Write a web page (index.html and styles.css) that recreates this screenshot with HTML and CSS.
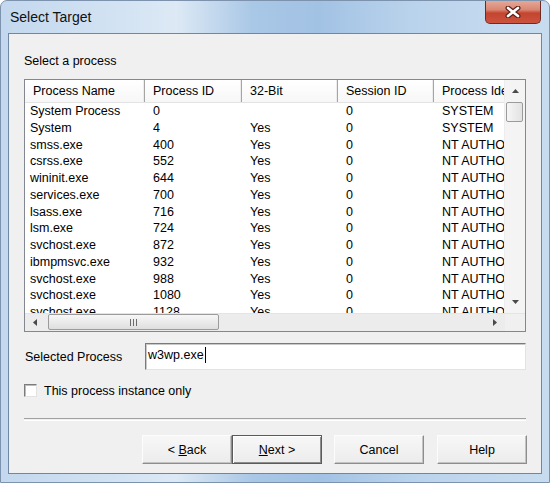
FILE: index.html
```html
<!DOCTYPE html>
<html lang="en">
<head>
    <meta charset="UTF-8">
    <meta name="viewport" content="width=device-width, initial-scale=1.0">
    <title>Select Target</title>
    <link rel="stylesheet" href="styles.css">
</head>
<body>
    <div id="dialog">
        <div class="titlebar">
            <p class="title">Select Target</p>
            <div class="close">
                <svg width="16" height="12" viewBox="0 0 16 12">
                    <path d="M3 2 L13 10 M13 2 L3 10" stroke="#5a2219" stroke-width="5" stroke-linecap="round"/>
                    <path d="M3 2 L13 10 M13 2 L3 10" stroke="#fff" stroke-width="2.6" stroke-linecap="round"/>
                </svg>
            </div>
        </div>

        <div class="client">
            <p class="caption">Select a process</p>

            <div class="list">
                <div class="list-body">
                    <div class="view">
                        <div class="row head">
                            <span>Process Name</span><span>Process ID</span><span>32-Bit</span><span>Session ID</span><span>Process Identity</span>
                        </div>
                        <div class="row"><span>System Process</span><span>0</span><span></span><span>0</span><span>SYSTEM</span></div>
                        <div class="row"><span>System</span><span>4</span><span>Yes</span><span>0</span><span>SYSTEM</span></div>
                        <div class="row"><span>smss.exe</span><span>400</span><span>Yes</span><span>0</span><span>NT AUTHORITY\SYSTEM</span></div>
                        <div class="row"><span>csrss.exe</span><span>552</span><span>Yes</span><span>0</span><span>NT AUTHORITY\SYSTEM</span></div>
                        <div class="row"><span>wininit.exe</span><span>644</span><span>Yes</span><span>0</span><span>NT AUTHORITY\SYSTEM</span></div>
                        <div class="row"><span>services.exe</span><span>700</span><span>Yes</span><span>0</span><span>NT AUTHORITY\SYSTEM</span></div>
                        <div class="row"><span>lsass.exe</span><span>716</span><span>Yes</span><span>0</span><span>NT AUTHORITY\SYSTEM</span></div>
                        <div class="row"><span>lsm.exe</span><span>724</span><span>Yes</span><span>0</span><span>NT AUTHORITY\SYSTEM</span></div>
                        <div class="row"><span>svchost.exe</span><span>872</span><span>Yes</span><span>0</span><span>NT AUTHORITY\SYSTEM</span></div>
                        <div class="row"><span>ibmpmsvc.exe</span><span>932</span><span>Yes</span><span>0</span><span>NT AUTHORITY\SYSTEM</span></div>
                        <div class="row"><span>svchost.exe</span><span>988</span><span>Yes</span><span>0</span><span>NT AUTHORITY\SYSTEM</span></div>
                        <div class="row"><span>svchost.exe</span><span>1080</span><span>Yes</span><span>0</span><span>NT AUTHORITY\SYSTEM</span></div>
                        <div class="row"><span>svchost.exe</span><span>1128</span><span>Yes</span><span>0</span><span>NT AUTHORITY\SYSTEM</span></div>
                    </div>
                    <div class="vscroll">
                        <div class="arrow-v">
                            <svg width="7" height="4" viewBox="0 0 7 4"><polygon points="0,4 3.5,0 7,4" fill="#4a4a4a"/></svg>
                        </div>
                        <div class="vthumb"></div>
                        <div class="track"></div>
                        <div class="arrow-v">
                            <svg width="7" height="4" viewBox="0 0 7 4"><polygon points="0,0 7,0 3.5,4" fill="#4a4a4a"/></svg>
                        </div>
                    </div>
                </div>
                <div class="hscroll">
                    <div class="arrow-h">
                        <svg width="4" height="7" viewBox="0 0 4 7"><polygon points="4,0 4,7 0,3.5" fill="#4a4a4a"/></svg>
                    </div>
                    <div class="hthumb">
                        <svg width="7" height="7" viewBox="0 0 7 7">
                            <path d="M0.5 0 V7 M3.5 0 V7 M6.5 0 V7" stroke="#6b6b6b" stroke-width="1"/>
                        </svg>
                    </div>
                    <div class="track"></div>
                    <div class="arrow-h">
                        <svg width="4" height="7" viewBox="0 0 4 7"><polygon points="0,0 4,3.5 0,7" fill="#4a4a4a"/></svg>
                    </div>
                    <div class="corner"></div>
                </div>
            </div>

            <div class="selected">
                <label>Selected Process</label>
                <div class="textbox">w3wp.exe<span class="caret"></span></div>
            </div>

            <div class="check">
                <span class="box"></span>
                <label>This process instance only</label>
            </div>

            <div class="separator"></div>

            <div class="buttons">
                <button>&lt; <u>B</u>ack</button>
                <button class="default"><u>N</u>ext &gt;</button>
                <button class="spaced">Cancel</button>
                <button class="spaced">Help</button>
            </div>
        </div>
    </div>
</body>
</html>
```

FILE: styles.css
```css
body
{
    margin: 0;
    font-family: "Liberation Sans", Arial, sans-serif;
    font-size: 12.5px;
    color: #000;
}
p
{
    margin: 0;
}

#dialog
{
    width: 550px;
    height: 483px;
    display: flex;
    flex-direction: column;
    box-sizing: border-box;
    border-radius: 7px 7px 0 0;
    border: 1px solid #7d93ad;
    background: linear-gradient(90deg, #c3d8ee 0%, #d3e3f3 22%, #dde9f5 32%, #a9c7e6 46%, #a2c2e4 58%, #bad3ec 75%, #c8dcf0 100%);
}

/* title bar */
.titlebar
{
    height: 32px;
    display: flex;
    justify-content: space-between;
    align-items: flex-start;
    padding: 0 8px 0 9px;
}
.titlebar .title
{
    font-size: 14px;
    line-height: 17px;
    margin-top: 8px;
    color: #111;
}
.close
{
    width: 56px;
    height: 23px;
    box-sizing: border-box;
    border: 1px solid #6d2b21;
    border-top: none;
    border-radius: 0 0 5px 5px;
    background: linear-gradient(#e6a797 0%, #d98673 40%, #c4442f 55%, #cc5340 100%);
    display: flex;
    align-items: center;
    justify-content: center;
}

/* client area */
.client
{
    flex: 1;
    margin: 0 7px 8px 7px;
    border: 1px solid #6f87a3;
    background-color: #f0f0f0;
    padding: 19px 15px 0 15px;
    display: flex;
    flex-direction: column;
}
.caption
{
    line-height: 16px;
    padding-left: 0;
}

/* process list */
.list
{
    margin-top: 10px;
    height: 253px;
    box-sizing: border-box;
    border: 1px solid #828790;
    background-color: #fff;
    display: flex;
    flex-direction: column;
}
.list-body
{
    display: flex;
    height: 233px;
}
.view
{
    width: 480px;
    overflow: hidden;
}
.row
{
    display: grid;
    grid-template-columns: 120px 97px 96px 96px 160px;
    height: 16.75px;
    line-height: 16.75px;
    white-space: nowrap;
}
.row span
{
    padding-left: 8px;
    overflow: visible;
}
.row span:first-child
{
    padding-left: 5px;
}
.row.head
{
    height: 23px;
    line-height: 22px;
    box-sizing: border-box;
    border-bottom: 1px solid #e3e3e3;
    background: linear-gradient(#ffffff, #f7f7f7);
}
.row.head span
{
    border-right: 1px solid #a5a5a5;
    box-shadow: inset -1px 0 #ececec;
}
.row.head span:first-child
{
    padding-left: 8px;
}
.row.head span:last-child
{
    border-right: none;
}

.vscroll
{
    width: 20px;
    display: flex;
    flex-direction: column;
    background-color: #f4f4f4;
    border-left: 1px solid #ededed;
}
.arrow-v
{
    height: 22px;
    display: flex;
    align-items: center;
    justify-content: center;
}
.vthumb
{
    height: 18px;
    margin: 0 2px 0 1px;
    border: 1px solid #9b9b9b;
    border-radius: 2px;
    background: linear-gradient(90deg, #f6f6f6, #e2e2e2);
}
.vscroll .track
{
    flex: 1;
}

.hscroll
{
    height: 18px;
    display: flex;
    background-color: #ececec;
    border-top: 1px solid #e4e4e4;
    box-sizing: border-box;
}
.arrow-h
{
    width: 20px;
    display: flex;
    align-items: center;
    justify-content: center;
}
.hthumb
{
    width: 171px;
    margin: 0 0 1px 3px;
    box-sizing: border-box;
    border: 1px solid #9b9b9b;
    border-radius: 2px;
    background: linear-gradient(#f7f7f7, #dedede);
    display: flex;
    align-items: center;
    justify-content: center;
}
.hscroll .track
{
    flex: 1;
}
.corner
{
    width: 20px;
    background-color: #f0f0f0;
}

/* selected process field */
.selected
{
    margin-top: 11px;
    display: flex;
    align-items: center;
    height: 27px;
}
.selected label
{
    width: 120px;
    padding-left: 1px;
}
.textbox
{
    flex: 1;
    height: 27px;
    box-sizing: border-box;
    border: 1px solid;
    border-color: #7a7a7a #e3e3e3 #e3e3e3 #7a7a7a;
    box-shadow: inset 1px 1px #c9c9c9;
    background-color: #fff;
    padding: 3px 0 0 2px;
    line-height: 16px;
    display: flex;
    align-items: flex-start;
}
.caret
{
    display: inline-block;
    width: 1px;
    height: 16px;
    background-color: #000;
    margin-left: 1px;
}

/* checkbox */
.check
{
    margin-top: 14px;
    display: flex;
    align-items: center;
    height: 13px;
}
.check .box
{
    width: 13px;
    height: 13px;
    box-sizing: border-box;
    border: 1px solid;
    border-color: #7c7c7c #e2e2e2 #e2e2e2 #7c7c7c;
    box-shadow: inset 1px 1px #bcbcbc;
    background-color: #fff;
}
.check label
{
    margin-left: 7px;
    line-height: 16px;
}

.separator
{
    margin-top: 21px;
    height: 1px;
    border-top: 1px solid #a0a0a0;
    border-bottom: 1px solid #fff;
}

/* buttons */
.buttons
{
    margin-top: 14px;
    display: flex;
    justify-content: flex-end;
    padding-right: 0;
    margin-right: -1px;
}
.buttons button
{
    width: 90px;
    height: 29px;
    font-family: "Liberation Sans", Arial, sans-serif;
    font-size: 12.5px;
    color: #000;
    background: linear-gradient(#f7f7f7, #ececec);
    border: 1px solid;
    border-color: #fcfcfc #8d8d8d #8d8d8d #fcfcfc;
    box-shadow: inset -1px -1px #c4c4c4;
    padding: 0;
}
.buttons button.default
{
    border-color: #5b5b5b;
    box-shadow: inset 1px 1px #fff, inset -1px -1px #8d8d8d;
}
.buttons button.spaced
{
    margin-left: 12px;
}
.buttons button.spaced:last-child
{
    margin-left: 13px;
}
```
